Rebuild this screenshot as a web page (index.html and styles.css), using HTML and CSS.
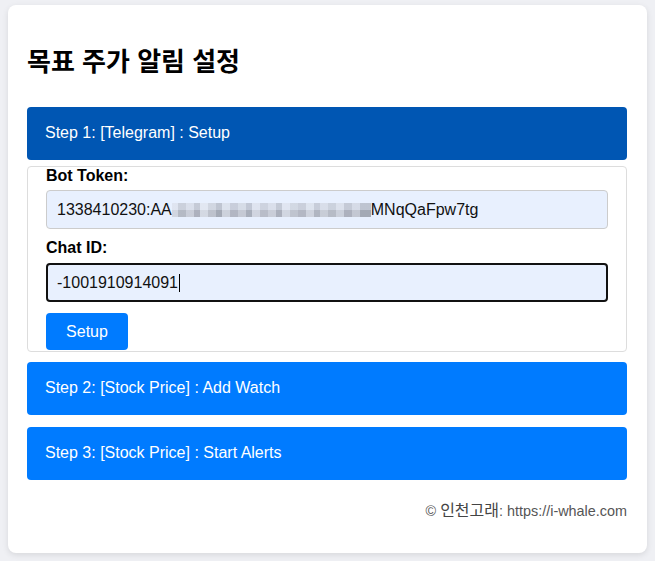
FILE: index.html
```html
<!DOCTYPE html>
<html lang="ko">
<head>
<meta charset="utf-8">
<link rel="stylesheet" href="styles.css">
</head>
<body>
<div class="card">
  <h2 class="title">목표 주가 알림 설정</h2>
  <div class="step step-active">Step 1: [Telegram] : Setup</div>
  <div class="panel">
    <label class="label">Bot Token:</label>
    <div class="input"><span>1338410230:AA</span><span class="blur"></span><span>MNqQaFpw7tg</span></div>
    <label class="label label-gap">Chat ID:</label>
    <div class="input input-focus"><span>-1001910914091</span><span class="caret"></span></div>
    <button class="btn">Setup</button>
  </div>
  <div class="step step-2">Step 2: [Stock Price] : Add Watch</div>
  <div class="step step-3">Step 3: [Stock Price] : Start Alerts</div>
  <div class="footer">© <span class="ko">인천고래</span>: https://i-whale.com</div>
</div>
</body>
</html>
```
FILE: styles.css
```css
* { box-sizing: border-box; }
html, body { margin: 0; padding: 0; }
body {
  background: #eff0f4;
  font-family: "Liberation Sans", Arial, "Noto Sans CJK KR", sans-serif;
  padding: 5px 8px 8px 8px;
}
.card {
  background: #fff;
  border-radius: 8px;
  box-shadow: 0 2px 6px rgba(0,0,0,0.1);
  padding: 20px 20px 32px 19px;
  height: 548px;
}
.title {
  margin: 22px 0 0 0;
  font-size: 26px;
  line-height: 30px;
  font-weight: bold;
  color: #000;
  font-family: "Liberation Sans", "Noto Sans CJK KR", sans-serif;
}
.step {
  color: #fff;
  font-size: 16px;
  line-height: 18px;
  padding: 17px 18px 18px 18px;
  border-radius: 4px;
  background: #007bff;
}
.step-active {
  background: #0056b3;
  margin-top: 30px;
}
.panel {
  margin-top: 6px;
  border: 1px solid #ddd;
  border-radius: 4px;
  padding: 0 18px 1px 18px;
  display: flex;
  flex-direction: column;
  align-items: flex-start;
}
.label {
  font-weight: bold;
  font-size: 16px;
  line-height: 18px;
  color: #000;
}
.label-gap { margin-top: 10px; }
.input {
  margin-top: 5px;
  width: 100%;
  height: 39px;
  background: #e8f0fe;
  border: 1px solid #ccc;
  border-radius: 4px;
  padding: 0 10px;
  display: flex;
  align-items: center;
  font-size: 16px;
  color: #111;
}
.input-focus {
  margin-top: 6px;
  border: 2px solid #111;
  padding: 0 9px;
}
.blur {
  display: inline-block;
  width: 199px;
  height: 14px;
  margin-top: 1px;
  background:
    linear-gradient(180deg, rgba(232,240,254,0.35) 0 7px, rgba(120,125,140,0.12) 7px 14px),
    linear-gradient(90deg,
      #d9dde6 0 6px, #b4b8c2 6px 14px, #cfd3dc 14px 22px, #a9adb8 22px 28px, #dde1ea 28px 36px,
      #bfc3cc 36px 44px, #9ea3ae 44px 50px, #d4d8e1 50px 58px, #b0b4bf 58px 66px, #c9cdd6 66px 74px,
      #a4a9b5 74px 80px, #d8dce5 80px 88px, #b9bdc7 88px 96px, #cfd3dc 96px 104px, #a7acb7 104px 110px,
      #dadee7 110px 118px, #c2c6cf 118px 126px, #b2b6c1 126px 134px, #d6dae3 134px 142px, #aeb2bd 142px 148px,
      #cdd1da 148px 156px, #b6bac4 156px 164px, #d2d6df 164px 172px, #a9adb8 172px 180px, #c7cbd4 180px 188px,
      #9da2ad 188px 199px);
  opacity: 0.85;
}
.caret {
  display: inline-block;
  width: 1px;
  height: 18px;
  background: #000;
  margin-left: 1px;
}
.btn {
  margin-top: 11px;
  background: #007bff;
  color: #fff;
  border: none;
  border-radius: 4px;
  font-family: inherit;
  font-size: 16px;
  width: 82px;
  height: 37px;
  padding: 0;
}
.step-2 { margin-top: 10px; }
.step-3 { margin-top: 12px; }
.footer {
  margin-top: 22px;
  text-align: right;
  font-size: 14.4px;
  line-height: 18px;
  color: #555;
}
.ko { font-size: 16px; color: #444; }
```
